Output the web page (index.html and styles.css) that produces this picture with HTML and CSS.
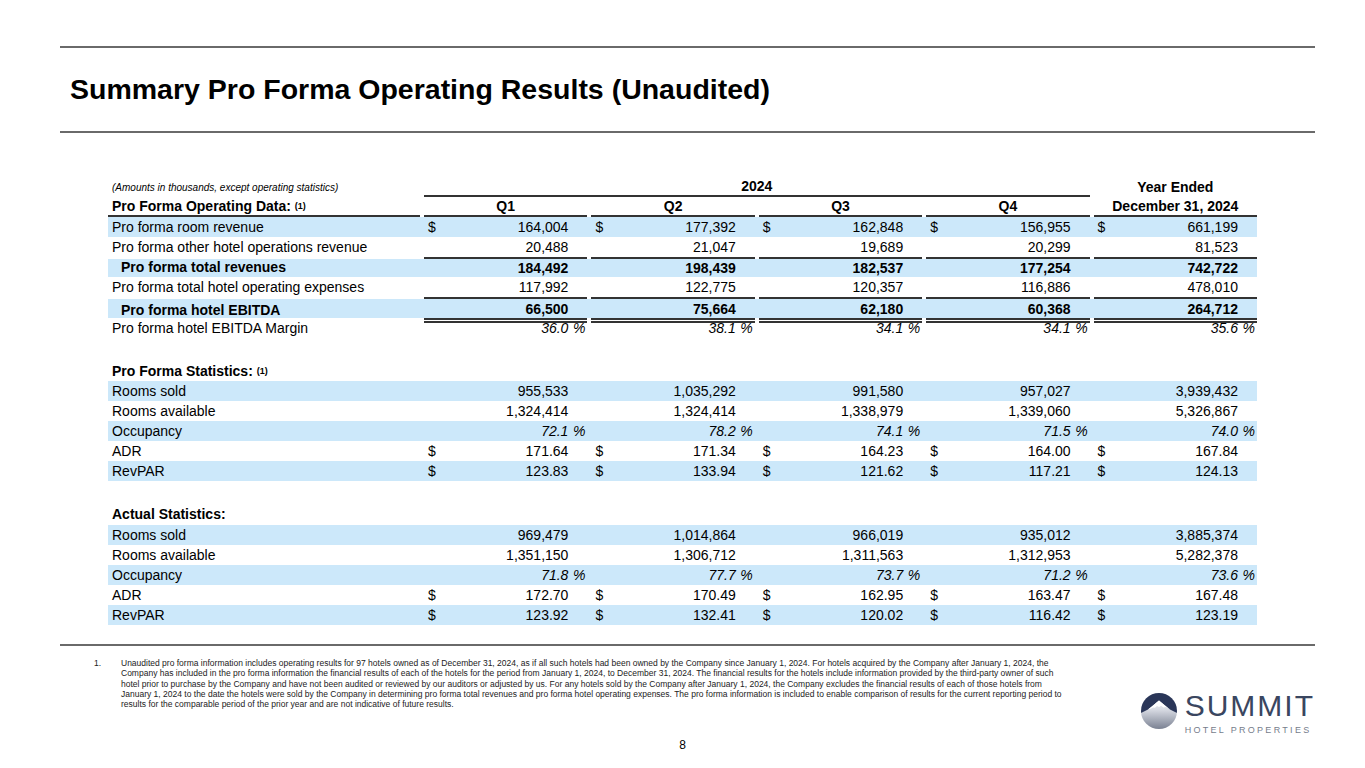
FILE: index.html
```html
<!DOCTYPE html>
<html lang="en">
<head>
<meta charset="utf-8">
<title>Summary Pro Forma Operating Results (Unaudited)</title>
<link rel="stylesheet" href="styles.css">
</head>
<body>
<div class="page">
  <div class="rule rule-top"></div>
  <div class="title-bar"><h1 class="title">Summary Pro Forma Operating Results (Unaudited)</h1></div>
  <div class="rule"></div>

  <div class="tbl">
    <div class="row r-top">
      <div class="lab note">(Amounts in thousands, except operating statistics)</div>
      <div class="cell span4 ctr b">2024</div>
      <div class="cell ctr b">Year Ended</div>
    </div>
    <div class="row r-hdr">
      <div class="lab b ul">Pro Forma Operating Data:&nbsp;<sup>(1)</sup></div>
      <div class="cell ctr b ul">Q1</div>
      <div class="cell ctr b ul">Q2</div>
      <div class="cell ctr b ul">Q3</div>
      <div class="cell ctr b ul">Q4</div>
      <div class="cell ctr b ul">December 31, 2024</div>
    </div>

    <div class="row blue">
      <div class="lab">Pro forma room revenue</div>
      <div class="cell"><span>$</span><span class="n">164,004</span></div>
      <div class="cell"><span>$</span><span class="n">177,392</span></div>
      <div class="cell"><span>$</span><span class="n">162,848</span></div>
      <div class="cell"><span>$</span><span class="n">156,955</span></div>
      <div class="cell"><span>$</span><span class="n">661,199</span></div>
    </div>
    <div class="row">
      <div class="lab">Pro forma other hotel operations revenue</div>
      <div class="cell"><span class="n">20,488</span></div>
      <div class="cell"><span class="n">21,047</span></div>
      <div class="cell"><span class="n">19,689</span></div>
      <div class="cell"><span class="n">20,299</span></div>
      <div class="cell"><span class="n">81,523</span></div>
    </div>
    <div class="row total b">
      <div class="lab ind">Pro forma total revenues</div>
      <div class="cell ol"><span class="n">184,492</span></div>
      <div class="cell ol"><span class="n">198,439</span></div>
      <div class="cell ol"><span class="n">182,537</span></div>
      <div class="cell ol"><span class="n">177,254</span></div>
      <div class="cell ol"><span class="n">742,722</span></div>
    </div>
    <div class="row">
      <div class="lab">Pro forma total hotel operating expenses</div>
      <div class="cell"><span class="n">117,992</span></div>
      <div class="cell"><span class="n">122,775</span></div>
      <div class="cell"><span class="n">120,357</span></div>
      <div class="cell"><span class="n">116,886</span></div>
      <div class="cell"><span class="n">478,010</span></div>
    </div>
    <div class="row ebitda b">
      <div class="lab ind">Pro forma hotel EBITDA</div>
      <div class="cell ol dbl"><span class="n">66,500</span></div>
      <div class="cell ol dbl"><span class="n">75,664</span></div>
      <div class="cell ol dbl"><span class="n">62,180</span></div>
      <div class="cell ol dbl"><span class="n">60,368</span></div>
      <div class="cell ol dbl"><span class="n">264,712</span></div>
    </div>
    <div class="row r-margin">
      <div class="lab">Pro forma hotel EBITDA Margin</div>
      <div class="cell pct"><span class="n">36.0</span><span class="pc">%</span></div>
      <div class="cell pct"><span class="n">38.1</span><span class="pc">%</span></div>
      <div class="cell pct"><span class="n">34.1</span><span class="pc">%</span></div>
      <div class="cell pct"><span class="n">34.1</span><span class="pc">%</span></div>
      <div class="cell pct"><span class="n">35.6</span><span class="pc">%</span></div>
    </div>

    <div class="gap"></div>
    <div class="row sect">
      <div class="lab b">Pro Forma Statistics:&nbsp;<sup>(1)</sup></div>
    </div>
    <div class="row blue">
      <div class="lab">Rooms sold</div>
      <div class="cell"><span class="n">955,533</span></div>
      <div class="cell"><span class="n">1,035,292</span></div>
      <div class="cell"><span class="n">991,580</span></div>
      <div class="cell"><span class="n">957,027</span></div>
      <div class="cell"><span class="n">3,939,432</span></div>
    </div>
    <div class="row">
      <div class="lab">Rooms available</div>
      <div class="cell"><span class="n">1,324,414</span></div>
      <div class="cell"><span class="n">1,324,414</span></div>
      <div class="cell"><span class="n">1,338,979</span></div>
      <div class="cell"><span class="n">1,339,060</span></div>
      <div class="cell"><span class="n">5,326,867</span></div>
    </div>
    <div class="row blue">
      <div class="lab">Occupancy</div>
      <div class="cell pct"><span class="n">72.1</span><span class="pc">%</span></div>
      <div class="cell pct"><span class="n">78.2</span><span class="pc">%</span></div>
      <div class="cell pct"><span class="n">74.1</span><span class="pc">%</span></div>
      <div class="cell pct"><span class="n">71.5</span><span class="pc">%</span></div>
      <div class="cell pct"><span class="n">74.0</span><span class="pc">%</span></div>
    </div>
    <div class="row">
      <div class="lab">ADR</div>
      <div class="cell"><span>$</span><span class="n">171.64</span></div>
      <div class="cell"><span>$</span><span class="n">171.34</span></div>
      <div class="cell"><span>$</span><span class="n">164.23</span></div>
      <div class="cell"><span>$</span><span class="n">164.00</span></div>
      <div class="cell"><span>$</span><span class="n">167.84</span></div>
    </div>
    <div class="row blue">
      <div class="lab">RevPAR</div>
      <div class="cell"><span>$</span><span class="n">123.83</span></div>
      <div class="cell"><span>$</span><span class="n">133.94</span></div>
      <div class="cell"><span>$</span><span class="n">121.62</span></div>
      <div class="cell"><span>$</span><span class="n">117.21</span></div>
      <div class="cell"><span>$</span><span class="n">124.13</span></div>
    </div>

    <div class="gap"></div>
    <div class="row sect sect2">
      <div class="lab b">Actual Statistics:</div>
    </div>
    <div class="row blue">
      <div class="lab">Rooms sold</div>
      <div class="cell"><span class="n">969,479</span></div>
      <div class="cell"><span class="n">1,014,864</span></div>
      <div class="cell"><span class="n">966,019</span></div>
      <div class="cell"><span class="n">935,012</span></div>
      <div class="cell"><span class="n">3,885,374</span></div>
    </div>
    <div class="row">
      <div class="lab">Rooms available</div>
      <div class="cell"><span class="n">1,351,150</span></div>
      <div class="cell"><span class="n">1,306,712</span></div>
      <div class="cell"><span class="n">1,311,563</span></div>
      <div class="cell"><span class="n">1,312,953</span></div>
      <div class="cell"><span class="n">5,282,378</span></div>
    </div>
    <div class="row blue">
      <div class="lab">Occupancy</div>
      <div class="cell pct"><span class="n">71.8</span><span class="pc">%</span></div>
      <div class="cell pct"><span class="n">77.7</span><span class="pc">%</span></div>
      <div class="cell pct"><span class="n">73.7</span><span class="pc">%</span></div>
      <div class="cell pct"><span class="n">71.2</span><span class="pc">%</span></div>
      <div class="cell pct"><span class="n">73.6</span><span class="pc">%</span></div>
    </div>
    <div class="row">
      <div class="lab">ADR</div>
      <div class="cell"><span>$</span><span class="n">172.70</span></div>
      <div class="cell"><span>$</span><span class="n">170.49</span></div>
      <div class="cell"><span>$</span><span class="n">162.95</span></div>
      <div class="cell"><span>$</span><span class="n">163.47</span></div>
      <div class="cell"><span>$</span><span class="n">167.48</span></div>
    </div>
    <div class="row blue">
      <div class="lab">RevPAR</div>
      <div class="cell"><span>$</span><span class="n">123.92</span></div>
      <div class="cell"><span>$</span><span class="n">132.41</span></div>
      <div class="cell"><span>$</span><span class="n">120.02</span></div>
      <div class="cell"><span>$</span><span class="n">116.42</span></div>
      <div class="cell"><span>$</span><span class="n">123.19</span></div>
    </div>
  </div>

  <div class="rule rule-bottom"></div>

  <div class="foot">
    <div class="fn">
      <div class="fn-n">1.</div>
      <div class="fn-t">Unaudited pro forma information includes operating results for 97 hotels owned as of December 31, 2024, as if all such hotels had been owned by the Company since January 1, 2024. For hotels acquired by the Company after January 1, 2024, the<br>Company has included in the pro forma information the financial results of each of the hotels for the period from January 1, 2024, to December 31, 2024. The financial results for the hotels include information provided by the third-party owner of such<br>hotel prior to purchase by the Company and have not been audited or reviewed by our auditors or adjusted by us. For any hotels sold by the Company after January 1, 2024, the Company excludes the financial results of each of those hotels from<br>January 1, 2024 to the date the hotels were sold by the Company in determining pro forma total revenues and pro forma hotel operating expenses. The pro forma information is included to enable comparison of results for the current reporting period to<br>results for the comparable period of the prior year and are not indicative of future results.</div>
    </div>
    <div class="logo">
      <svg class="logo-mark" width="36" height="36" viewBox="0 0 36 36">
        <defs>
          <linearGradient id="lg-ground" x1="0" y1="0" x2="0" y2="1">
            <stop offset="0" stop-color="#ffffff"/>
            <stop offset="0.45" stop-color="#d9dce4"/>
            <stop offset="1" stop-color="#7a8192"/>
          </linearGradient>
          <clipPath id="cp-circle"><circle cx="18" cy="18" r="18"/></clipPath>
        </defs>
        <g clip-path="url(#cp-circle)">
          <rect width="36" height="36" fill="url(#lg-ground)"/>
          <path d="M0 0H36V20L29 16.5 24 12.5 21 10 18 7.5 15.5 9.5 12 12.5 7 16.5 0 20Z" fill="#2a3658"/>
          <path d="M18 7.5L15.5 9.5 12 12.5 7 16.5 9 16 12 14.5 14 14.8 16 13 18 14 20 12.8 22.5 14.5 25 14 29 16.5 24 12.5 21 10Z" fill="#ffffff"/>
        </g>
      </svg>
      <div class="logo-text">
        <div class="brand">SUMMIT</div>
        <div class="brand-sub">HOTEL PROPERTIES</div>
      </div>
    </div>
  </div>

  <div class="pg">8</div>
</div>
</body>
</html>
```
FILE: styles.css
```css
html, body {
  margin: 0;
  padding: 0;
  background: #ffffff;
}

body {
  font-family: "Liberation Sans", Arial, sans-serif;
  color: #000000;
}

.page {
  width: 1365px;
  height: 768px;
  overflow: hidden;
  background: #ffffff;
}

.rule {
  height: 2px;
  background: #6a6a6a;
  margin: 0 50px 0 60px;
}

.rule-top {
  margin-top: 46px;
}

.title-bar {
  height: 83px;
  display: flex;
  align-items: center;
  padding-left: 70px;
}

.title {
  margin: 0;
  font-size: 28.5px;
  font-weight: 700;
  line-height: 1;
  color: #000000;
}

/* ---------- table ---------- */
.tbl {
  margin: 44px 0 0 108px;
  width: 1149px;
  font-size: 14px;
}

.row {
  display: grid;
  grid-template-columns: 312px repeat(5, 1fr);
  height: 20px;
}

.row > div {
  box-sizing: border-box;
  display: flex;
  align-items: center;
  white-space: nowrap;
}

.lab {
  padding-left: 4px;
}

.ind {
  padding-left: 13px;
}

.cell {
  margin-left: 4px;
  padding: 0 19px 0 4px;
}

.cell .n {
  margin-left: auto;
}

.b {
  font-weight: 700;
}

.ctr {
  justify-content: center;
  padding: 0;
}

.span4 {
  grid-column: span 4;
  border-bottom: 2px solid #333333;
}

.note {
  font-size: 10px;
  font-style: italic;
}

.ul {
  border-bottom: 2px solid #333333;
}

.blue {
  background: #cce8fa;
}

.total {
  background: linear-gradient(#cce8fa, #cce8fa) 0 2px / 100% 18px no-repeat;
}

.ol {
  border-top: 2px solid #333333;
}

.ebitda {
  height: 26px;
  background: linear-gradient(#cce8fa, #cce8fa) 0 2px / 100% 19px no-repeat;
}

.dbl {
  border-bottom: 5px double #333333;
}

.r-margin {
  height: 15px;
}

.r-margin > div {
  align-items: flex-start;
  line-height: 10px;
}

.pct {
  font-style: italic;
  padding-right: 0;
}

.pc {
  width: 19px;
  box-sizing: border-box;
  padding-right: 2px;
  text-align: right;
}

sup {
  font-size: 9px;
  line-height: 0;
  vertical-align: 7px;
}

.gap {
  height: 22px;
}

.sect {
  height: 21px;
}

.sect2 {
  height: 22px;
}

.rule-bottom {
  margin-top: 19px;
}

/* ---------- footer ---------- */
.foot {
  display: flex;
  align-items: flex-start;
  margin-top: 12px;
}

.fn {
  display: flex;
  margin-left: 94px;
  font-size: 8.5px;
  line-height: 10.3px;
  color: #222222;
  white-space: nowrap;
}

.fn-n {
  width: 27px;
  flex: none;
}

.logo {
  margin-left: auto;
  margin-right: 50px;
  margin-top: 35px;
  display: flex;
  align-items: flex-start;
  gap: 8px;
}

.logo-mark {
  display: block;
  flex: none;
}

.logo-text {
  display: flex;
  flex-direction: column;
}

.brand {
  font-family: "Liberation Sans", Arial, sans-serif;
  font-weight: 400;
  font-size: 30px;
  line-height: 26px;
  letter-spacing: 2px;
  color: #3a4660;
}

.brand-sub {
  font-family: "Liberation Sans", Arial, sans-serif;
  font-weight: 400;
  font-size: 9px;
  line-height: 10px;
  letter-spacing: 2.3px;
  margin-top: 6px;
  color: #767d8c;
}

.pg {
  text-align: center;
  font-size: 12px;
  line-height: 14px;
  margin-top: 3px;
}
```
